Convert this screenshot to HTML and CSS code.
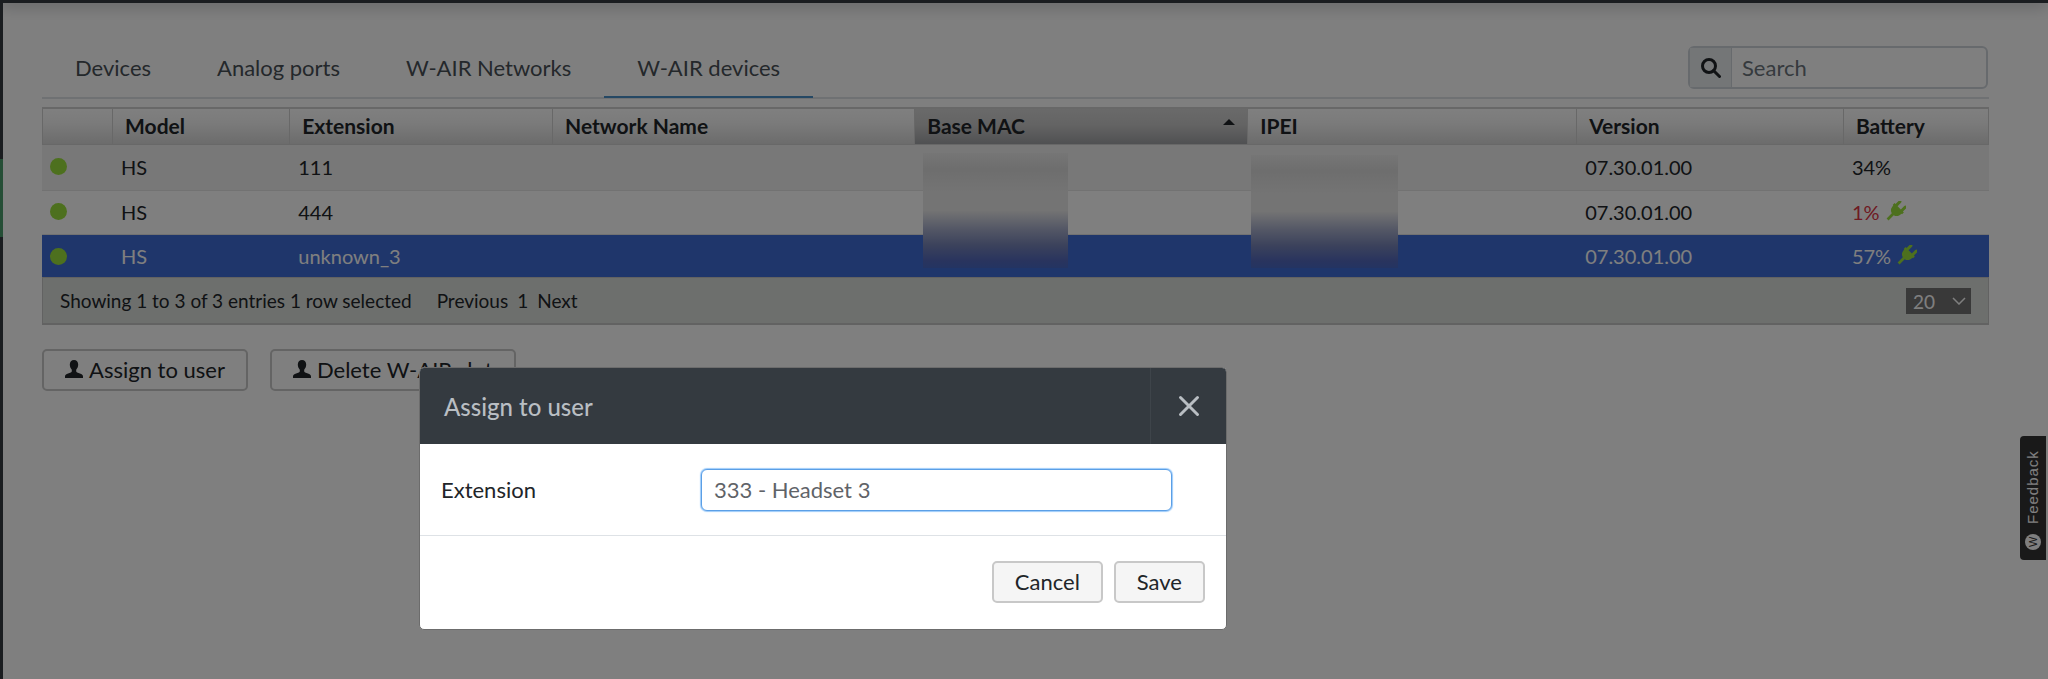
FILE: index.html
```html
<!DOCTYPE html>
<html lang="en">
<head>
    <meta charset="UTF-8">
    <meta name="viewport" content="width=device-width, initial-scale=1.0">
    <title>W-AIR devices</title>
    <link rel="stylesheet" href="styles.css">
</head>
<body>
    <svg class="sprite" aria-hidden="true">
        <symbol id="icon-plug" viewBox="0 0 20 20">
            <g transform="rotate(45 10 10)">
                <path d="M5 .4a1.4 1.4 0 0 1 2.8 0V5h4.400V.4a1.4 1.4 0 0 1 2.800 0V5h1.300v2.500h-.8c0 3.400-1.500 5.500-4.200 6.200v7H8.700v-7c-2.700-.7-4.200-2.800-4.200-6.200h-.8V5H5z" fill="currentColor"/>
            </g>
        </symbol>
        <symbol id="icon-user" viewBox="0 0 18 18">
            <path d="M9 0c2.600 0 4.200 1.800 4.200 4.600 0 2-.8 4-2 5.100v1.500c0 .6.4 1 1 1.300l4 1.500c1.100.5 1.800 1.300 1.800 2.500V18H0v-1.500c0-1.200.7-2 1.800-2.500l4-1.500c.6-.3 1-.7 1-1.300V9.700c-1.200-1.100-2-3.100-2-5.100C4.800 1.800 6.400 0 9 0z" fill="currentColor"/>
        </symbol>
    </svg>

    <div class="topbar"></div>
    <div class="layout">
        <div class="sidebar">
            <div class="sidebar-active"></div>
        </div>

        <main class="content">
            <div class="toolbar">
                <nav class="tabs">
                    <a href="#" class="tab">Devices</a>
                    <a href="#" class="tab">Analog ports</a>
                    <a href="#" class="tab">W-AIR Networks</a>
                    <a href="#" class="tab active">W-AIR devices</a>
                </nav>
                <div class="search">
                    <label class="search-icon" for="search" aria-label="Search">
                        <svg width="20" height="20" viewBox="0 0 20 20" fill="none" stroke="currentColor" stroke-width="3">
                            <circle cx="8" cy="8" r="6.5"/>
                            <path d="M12.5 12.5l6 6" stroke-linecap="round"/>
                        </svg>
                    </label>
                    <input type="text" id="search" class="search-input" placeholder="Search">
                </div>
            </div>

            <table class="devices">
                <colgroup>
                    <col class="col-status">
                    <col class="col-model">
                    <col class="col-extension">
                    <col class="col-network">
                    <col class="col-mac">
                    <col class="col-ipei">
                    <col class="col-version">
                    <col class="col-battery">
                </colgroup>
                <thead>
                    <tr>
                        <th></th>
                        <th>Model</th>
                        <th>Extension</th>
                        <th>Network Name</th>
                        <th class="sorted">Base MAC</th>
                        <th>IPEI</th>
                        <th>Version</th>
                        <th>Battery</th>
                    </tr>
                </thead>
                <tbody>
                    <tr class="odd">
                        <td class="status"><span class="dot"></span></td>
                        <td>HS</td>
                        <td>111</td>
                        <td></td>
                        <td class="masked"><div class="mask mask-mac"></div></td>
                        <td class="masked"><div class="mask mask-ipei"></div></td>
                        <td>07.30.01.00</td>
                        <td>34%</td>
                    </tr>
                    <tr>
                        <td class="status"><span class="dot"></span></td>
                        <td>HS</td>
                        <td>444</td>
                        <td></td>
                        <td></td>
                        <td></td>
                        <td>07.30.01.00</td>
                        <td><span class="low">1%</span> <svg class="plug"><use href="#icon-plug"/></svg></td>
                    </tr>
                    <tr class="selected">
                        <td class="status"><span class="dot"></span></td>
                        <td>HS</td>
                        <td>unknown_3</td>
                        <td></td>
                        <td></td>
                        <td></td>
                        <td>07.30.01.00</td>
                        <td>57% <svg class="plug"><use href="#icon-plug"/></svg></td>
                    </tr>
                </tbody>
            </table>

            <div class="table-footer">
                <span class="info">Showing 1 to 3 of 3 entries 1 row selected</span>
                <div class="paging">
                    <a href="#">Previous</a>
                    <a href="#">1</a>
                    <a href="#">Next</a>
                </div>
                <div class="page-size">
                    <select aria-label="Rows per page">
                        <option>20</option>
                    </select>
                    <svg class="chevron" viewBox="0 0 14 8" fill="none" stroke="currentColor" stroke-width="1.5"><path d="M1 1l6 6 6-6"/></svg>
                </div>
            </div>

            <div class="actions">
                <button type="button" class="btn"><svg class="user"><use href="#icon-user"/></svg>Assign to user</button>
                <button type="button" class="btn"><svg class="user"><use href="#icon-user"/></svg>Delete W-AIR slot</button>
            </div>
        </main>
    </div>

    <button type="button" class="feedback">
        <span class="feedback-logo">W</span>
        <span>Feedback</span>
    </button>

    <div class="backdrop"></div>

    <div class="modal" role="dialog" aria-labelledby="modalTitle">
        <div class="modal-header">
            <h2 class="modal-title" id="modalTitle">Assign to user</h2>
            <button type="button" class="modal-close" aria-label="Close">
                <svg width="22" height="22" viewBox="0 0 22 22" fill="none" stroke="currentColor" stroke-width="3" stroke-linecap="round"><path d="M2.5 2.5l17 17M19.5 2.5l-17 17"/></svg>
            </button>
        </div>
        <div class="modal-body">
            <label for="extension">Extension</label>
            <input type="text" id="extension" class="extension-input" value="333 - Headset 3">
        </div>
        <div class="modal-footer">
            <button type="button" class="btn">Cancel</button>
            <button type="button" class="btn">Save</button>
        </div>
    </div>
</body>
</html>
```

FILE: styles.css
```css
* {
    margin: 0;
    padding: 0;
    box-sizing: border-box;
}

body {
    font-family: Lato, "Open Sans", sans-serif;
    font-size: 22px;
    line-height: 28px;
    color: #212529;
    background-color: white;
    min-height: 100vh;
    display: flex;
    flex-direction: column;
}

button,
input,
select {
    font: inherit;
    color: inherit;
}

a {
    color: inherit;
    text-decoration: none;
}

.sprite {
    position: absolute;
    width: 0;
    height: 0;
}

.topbar {
    height: 3px;
    background-color: #343a40;
    box-shadow: 0 0 16px #343a40;
}

.layout {
    display: flex;
    flex: 1;
}

.sidebar {
    width: 3px;
    padding-top: 156px;
    background-color: #343a40;
}

.sidebar-active {
    height: 78px;
    background-color: #4a9c6d;
}

.content {
    flex: 1;
    padding: 43px 59px 0 39px;
}

/* Tabs and search */
.toolbar {
    display: flex;
    justify-content: space-between;
    align-items: flex-start;
    height: 53px;
    border-bottom: 2px solid #dee2e6;
    margin-bottom: 8px;
}

.tabs {
    display: flex;
}

.tab {
    height: 52px;
    padding: 8px 33px 0;
    color: #495057;
}

.tab.active {
    border-bottom: 2px solid #4a90c8;
}

.search {
    display: flex;
    width: 300px;
    height: 43px;
    margin-right: 1px;
    border: 2px solid #ced4da;
    border-radius: 6px;
}

.search-icon {
    display: flex;
    align-items: center;
    justify-content: center;
    width: 42px;
    border-right: 1px solid #ced4da;
    background-color: #e9ecef;
}

.search-input {
    flex: 1;
    min-width: 0;
    padding: 0 10px;
    border: none;
    background: none;
    outline: none;
}

.search-input::placeholder {
    color: #6c757d;
    opacity: 1;
}

/* Devices table */
.devices {
    width: 100%;
    table-layout: fixed;
    border-collapse: separate;
    border-spacing: 0;
}

.col-status { width: 3.6%; }
.col-model { width: 9.1%; }
.col-extension { width: 13.5%; }
.col-network { width: 18.6%; }
.col-mac { width: 17.1%; }
.col-ipei { width: 16.9%; }
.col-version { width: 13.7%; }
.col-battery { width: 7.5%; }

.devices th {
    height: 38px;
    padding: 0 12px 2px;
    border: solid #d0d0d0;
    border-width: 2px 0 1px 1px;
    background: linear-gradient(#ffffff, #f6f6f6 40%, #d8d8d8);
    font-size: 21px;
    text-align: left;
}

.devices th:last-child {
    border-right-width: 1px;
}

.devices th.sorted {
    background: linear-gradient(#d4d4d4, #c8c8c8 45%, #a0a2a5);
    position: relative;
}

.devices th.sorted::after {
    content: "";
    position: absolute;
    top: 10px;
    right: 12px;
    border: 6px solid transparent;
    border-top-width: 0;
    border-bottom-color: #212529;
}

.devices td {
    height: 44px;
    padding: 0 9px 2px;
    font-size: 20px;
    border-bottom: 1px solid #e4e4e4;
}

.devices .odd td {
    height: 46px;
    background-color: #f0f0f0;
}

.devices .selected td {
    height: 42px;
    padding-bottom: 0;
    color: white;
    background-color: #3e6cd6;
    border-bottom: none;
}

.devices .status {
    padding-left: 8px;
}

.dot {
    display: block;
    width: 17px;
    height: 17px;
    border-radius: 50%;
    background-color: #9be03c;
}

.low {
    color: #dc3545;
}

.plug {
    width: 21px;
    height: 21px;
    vertical-align: -2px;
    color: #9be03c;
}

/* Blurred-out addresses */
.devices .masked {
    position: relative;
}

.mask {
    position: absolute;
    top: 8px;
    left: 9px;
    width: 145px;
    height: 115px;
    background: linear-gradient(#ececec, #dcdcdc 14%, #e9e9e9 35%, #e8e8e8 50%, #a8afcc 66%, #7885b8 80%, #5268bd 94%, #4868c4);
}

.mask-ipei {
    top: 10px;
    left: 4px;
    width: 147px;
    height: 113px;
}

.table-footer {
    display: flex;
    align-items: center;
    height: 48px;
    padding: 0 17px;
    border: 1px solid #c4c4c4;
    border-bottom-width: 2px;
    background-color: #dbdedb;
    font-size: 19px;
}

.paging {
    display: flex;
    gap: 9px;
    margin-left: 25px;
}

.page-size {
    position: relative;
    margin-left: auto;
}

.page-size select {
    display: block;
    width: 65px;
    height: 26px;
    padding-left: 7px;
    border: none;
    border-radius: 0;
    background-color: #737373;
    color: white;
    appearance: none;
}

.chevron {
    position: absolute;
    top: 9px;
    right: 5px;
    width: 14px;
    height: 8px;
    color: white;
    pointer-events: none;
}

.actions {
    display: flex;
    gap: 22px;
    margin-top: 24px;
}

.btn {
    height: 42px;
    padding: 0 21px;
    border: 2px solid #c8c8c8;
    border-radius: 5px;
    background-color: #f5f5f5;
}

.actions .btn {
    background-color: white;
}

.user {
    width: 18px;
    height: 18px;
    margin-right: 6px;
}

/* Feedback label on the right edge */
.feedback {
    position: fixed;
    right: 2px;
    top: 436px;
    display: flex;
    align-items: center;
    gap: 10px;
    height: 124px;
    padding: 10px 0;
    width: 26px;
    border: none;
    border-radius: 0 4px 4px 0;
    background-color: #333333;
    color: white;
    font-family: "Liberation Sans", Arial, sans-serif;
    font-size: 15px;
    line-height: 26px;
    letter-spacing: 1px;
    writing-mode: vertical-rl;
    transform: rotate(180deg);
}

.feedback-logo {
    width: 16px;
    height: 16px;
    border-radius: 50%;
    background-color: white;
    color: #333333;
    font-size: 11px;
    line-height: 16px;
    letter-spacing: 0;
    text-align: center;
}

/* Modal */
.backdrop {
    position: fixed;
    inset: 0;
    background-color: rgba(0, 0, 0, 0.5);
}

.modal {
    position: fixed;
    top: 367px;
    left: 419px;
    width: 808px;
    border: 1px solid #6c6c6c;
    border-radius: 5px;
    background-color: white;
    overflow: hidden;
}

.modal-header {
    display: flex;
    justify-content: space-between;
    height: 76px;
    background-color: #343a40;
    color: #b9bec3;
}

.modal-title {
    padding-left: 24px;
    font-size: 24px;
    font-weight: 500;
    line-height: 78px;
}

.modal-close {
    display: flex;
    align-items: center;
    justify-content: center;
    width: 76px;
    border: none;
    border-left: 1px solid #3e444a;
    background: none;
}

.modal-body {
    display: flex;
    align-items: center;
    justify-content: space-between;
    height: 92px;
    padding: 0 54px 0 21px;
    border-bottom: 1px solid #dee2e6;
}

.extension-input {
    width: 471px;
    height: 42px;
    padding: 0 12px;
    border: 1px solid #5b9fe6;
    border-radius: 6px;
    box-shadow: 0 0 1px 1px #9dcbfa;
    outline: none;
    color: #5f6368;
}

.modal-footer {
    display: flex;
    justify-content: flex-end;
    gap: 11px;
    padding: 25px 21px 26px;
}
```
